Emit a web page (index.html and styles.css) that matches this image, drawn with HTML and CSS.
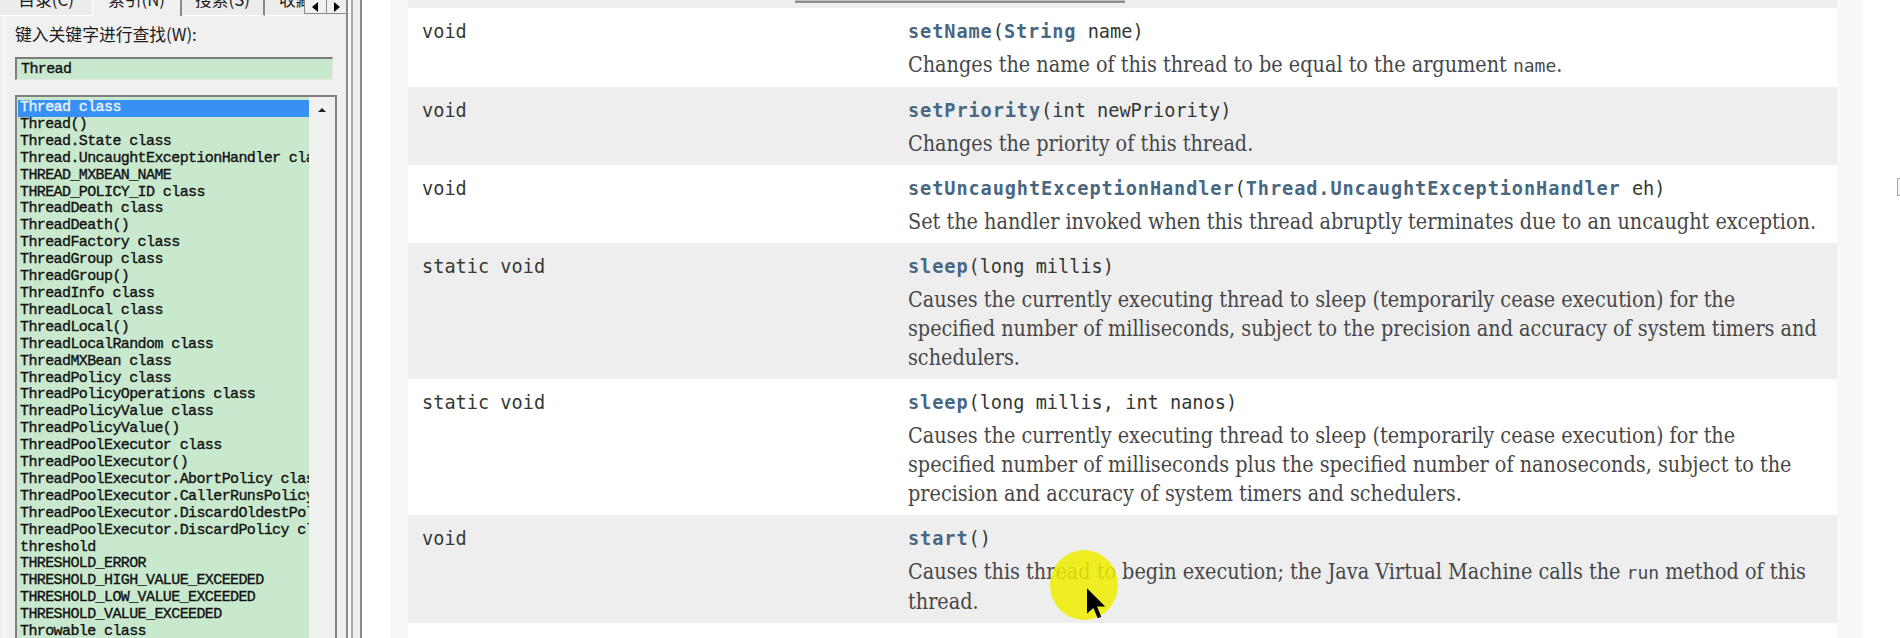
FILE: index.html
```html
<!DOCTYPE html>
<html lang="zh-CN">
<head>
<meta charset="utf-8">
<title>Thread - Java API</title>
<link rel="stylesheet" href="styles.css">
</head>
<body>
<div class="app">
  <aside class="sidebar">
    <div class="tabs">
      <div class="tab"><span>目录(C)</span></div>
      <div class="tab active"><span>索引(N)</span></div>
      <div class="tab narrow"><span>搜索(S)</span></div>
      <div class="tab cut"><span>收藏夹(I)</span></div>
      <div class="tab-arrows"><span class="arr left"></span><span class="arr right"></span></div>
    </div>
    <div class="page">
      <div class="kw-label">键入关键字进行查找(W):</div>
      <div class="kw-input">Thread</div>
      <div class="list">
        <ul class="items">
          <li class="sel">Thread class</li>
          <li>Thread()</li>
          <li>Thread.State class</li>
          <li>Thread.UncaughtExceptionHandler class</li>
          <li>THREAD_MXBEAN_NAME</li>
          <li>THREAD_POLICY_ID class</li>
          <li>ThreadDeath class</li>
          <li>ThreadDeath()</li>
          <li>ThreadFactory class</li>
          <li>ThreadGroup class</li>
          <li>ThreadGroup()</li>
          <li>ThreadInfo class</li>
          <li>ThreadLocal class</li>
          <li>ThreadLocal()</li>
          <li>ThreadLocalRandom class</li>
          <li>ThreadMXBean class</li>
          <li>ThreadPolicy class</li>
          <li>ThreadPolicyOperations class</li>
          <li>ThreadPolicyValue class</li>
          <li>ThreadPolicyValue()</li>
          <li>ThreadPoolExecutor class</li>
          <li>ThreadPoolExecutor()</li>
          <li>ThreadPoolExecutor.AbortPolicy class</li>
          <li>ThreadPoolExecutor.CallerRunsPolicy class</li>
          <li>ThreadPoolExecutor.DiscardOldestPolicy class</li>
          <li>ThreadPoolExecutor.DiscardPolicy class</li>
          <li>threshold</li>
          <li>THRESHOLD_ERROR</li>
          <li>THRESHOLD_HIGH_VALUE_EXCEEDED</li>
          <li>THRESHOLD_LOW_VALUE_EXCEEDED</li>
          <li>THRESHOLD_VALUE_EXCEEDED</li>
          <li>Throwable class</li>
          <li>throwing()</li>
        </ul>
        <div class="vscroll"><span class="up"></span></div>
      </div>
    </div>
  </aside>
  <div class="splitter"></div>
  <main class="content">
    <div class="block">
      <div class="top-band"><div class="cap-bar"></div></div>
      <div class="row alt">
        <div class="type">void</div>
        <div class="member">
          <div class="sig"><span class="lnk">setName</span>(<span class="lnk">String</span> name)</div>
          <div class="desc">Changes the name of this thread to be equal to the argument <code>name</code>.</div>
        </div>
      </div>
      <div class="row">
        <div class="type">void</div>
        <div class="member">
          <div class="sig"><span class="lnk">setPriority</span>(int newPriority)</div>
          <div class="desc">Changes the priority of this thread.</div>
        </div>
      </div>
      <div class="row alt">
        <div class="type">void</div>
        <div class="member">
          <div class="sig"><span class="lnk">setUncaughtExceptionHandler</span>(<span class="lnk">Thread.UncaughtExceptionHandler</span> eh)</div>
          <div class="desc">Set the handler invoked when this thread abruptly terminates due to an uncaught exception.</div>
        </div>
      </div>
      <div class="row">
        <div class="type">static void</div>
        <div class="member">
          <div class="sig"><span class="lnk">sleep</span>(long millis)</div>
          <div class="desc">Causes the currently executing thread to sleep (temporarily cease execution) for the specified number of milliseconds, subject to the precision and accuracy of system timers and schedulers.</div>
        </div>
      </div>
      <div class="row alt">
        <div class="type">static void</div>
        <div class="member">
          <div class="sig"><span class="lnk">sleep</span>(long millis, int nanos)</div>
          <div class="desc">Causes the currently executing thread to sleep (temporarily cease execution) for the specified number of milliseconds plus the specified number of nanoseconds, subject to the precision and accuracy of system timers and schedulers.</div>
        </div>
      </div>
      <div class="row">
        <div class="type">void</div>
        <div class="member">
          <div class="sig"><span class="lnk">start</span>()</div>
          <div class="desc">Causes this thread to begin execution; the Java Virtual Machine calls the <code>run</code> method of this thread.</div>
        </div>
      </div>
      <div class="row alt">
        <div class="type">void</div>
        <div class="member">
          <div class="sig"><span class="lnk">stop</span>()</div>
          <div class="desc">Deprecated.</div>
        </div>
      </div>
    </div>
    <div class="scroll-mark"></div>
  </main>
  <div class="spot"></div>
  <svg class="pointer" width="19" height="32" viewBox="0 0 12 20" aria-hidden="true">
    <path d="M0 0 L0 16 L4 12.5 L6.8 19 L9 18 L6.3 11.6 L11.5 11.6 Z" fill="#000"/>
  </svg>
</div>
</body>
</html>
```

FILE: styles.css
```css
* { box-sizing: border-box; margin: 0; padding: 0; }
html, body { width: 1900px; height: 638px; overflow: hidden; background: #fff; }
body { font-family: "DejaVu Sans", sans-serif; }

.app { position: relative; display: flex; height: 638px; overflow: hidden; }

/* ---------- left help panel ---------- */
.sidebar {
  width: 348px; flex: none; background: #f0f0f0;
  border-right: 2px solid #8a8a8a;
  display: flex; flex-direction: column; overflow: hidden;
}
.tabs { height: 16px; flex: none; display: flex; position: relative; overflow: hidden; }
.tab {
  width: 92px; flex: none; display: flex; justify-content: center;
  border-bottom: 1px solid #fff; background: #ececec;
  font-family: "Noto Sans CJK SC", sans-serif; font-size: 16.8px; color: #1a1a1a;
}
.tab span { display: block; line-height: 18px; margin-top: -10px; white-space: nowrap; }
.tab.active { width: 90px; background: #f0f0f0; border-left: 1px solid #fff; border-right: 2px solid #8a8a8a; border-bottom: none; }
.tab.narrow { width: 83px; border-right: 2px solid #8a8a8a; }
.tab.cut { width: 39px; justify-content: flex-start; padding-left: 14px; overflow: hidden; }
.tab-arrows { width: 43px; flex: none; display: flex; height: 14px; border-bottom: 1px solid #8a8a8a; }
.arr { flex: 1; display: flex; align-items: center; justify-content: center; border-left: 1px solid #8a8a8a; background: #f0f0f0; }
.arr.left::before { content: ""; border-style: solid; border-width: 5px 6px 5px 0; border-color: transparent #000 transparent transparent; }
.arr.right::before { content: ""; border-style: solid; border-width: 5px 0 5px 6px; border-color: transparent transparent transparent #000; }

.page {
  flex: 1; margin-left: 4px; border-left: 1px solid #fff; padding-left: 10px;
  display: flex; flex-direction: column;
}
.kw-label {
  margin-top: 8px; line-height: 20px;
  font-family: "Noto Sans CJK SC", sans-serif; font-size: 16.8px; color: #1a1a1a;
}
.kw-input {
  margin-top: 13px; width: 318px; height: 23px;
  background: #c9e9cf;
  border-top: 2px solid #7d7d7d; border-left: 2px solid #7d7d7d;
  border-right: 1px solid #e4e4e4; border-bottom: 1px solid #e4e4e4;
  padding-left: 4px;
  font-family: "Liberation Mono", monospace; font-size: 15px; letter-spacing: -0.6px;
  -webkit-text-stroke: 0.35px currentColor;
  line-height: 21px; color: #111;
}
.list {
  margin-top: 15px; width: 322px; flex: 1;
  border: 2px solid #808080; display: flex; background: #c9e9cf;
}
.items {
  list-style: none; flex: 1; min-width: 0; padding: 3px 0 0 1px;
  font-family: "Liberation Mono", monospace; font-size: 15px; letter-spacing: -0.6px;
  -webkit-text-stroke: 0.35px currentColor;
  line-height: 16.9px; color: #111;
}
.items li { padding-left: 2px; white-space: nowrap; overflow: hidden; }
.items li.sel { background: #3790f2; color: #eaf4ff; }
.vscroll { width: 26px; flex: none; background: #f0f0f0; }
.up { display: flex; height: 26px; align-items: center; justify-content: center; }
.up::before { content: ""; border-style: solid; border-width: 0 4px 4px 4px; border-color: transparent transparent #222 transparent; }

.splitter {
  width: 14px; flex: none; background: #efefef;
  border-left: 3px solid #fafafa; border-right: 2px solid #8a8a8a;
  box-shadow: inset 2px 0 0 #a8a8a8;
}

/* ---------- javadoc content ---------- */
.content { flex: 1; position: relative; padding-left: 28px; background: #fff; }
.block { width: 1472px; height: 100%; background: #f8f8f8; padding: 0 25px 0 18px; overflow: hidden; }
.top-band { height: 8px; background: #eeeeef; padding-left: 387px; }
.cap-bar { width: 330px; height: 3px; background: #8d8d8d; border-top: 1px solid #bdbdbd; }

.row {
  display: grid; grid-template-columns: 486px 1fr;
  background: #eeeeef; padding: 10px 0 7.5px;
}
.row.alt { background: #fff; }
.type {
  padding-left: 14px;
  font-family: "DejaVu Sans Mono", monospace; font-size: 18.6px; line-height: 28px; color: #353833;
}
.member { padding: 0 10px 0 14px; }
.sig {
  font-family: "DejaVu Sans Mono", monospace; font-size: 18.6px; line-height: 28px; color: #353833;
  white-space: nowrap;
}
.lnk { font-weight: bold; color: #4a6782; letter-spacing: 0.9px; }
.desc {
  margin-top: 3.5px;
  font-family: "DejaVu Serif", serif; font-stretch: condensed; font-size: 21.4px; line-height: 29px; color: #474747;
}
.desc code { font-family: "DejaVu Sans Mono", monospace; font-stretch: condensed; font-size: 18px; color: #4a4a4a; }

.scroll-mark {
  position: absolute; right: 0; top: 178px; width: 3px; height: 18px;
  border: 1px solid #a8a8a8; border-right: none; background: #f4f4f4;
}

/* recorded cursor highlight */
.spot {
  position: absolute; left: 1050px; top: 550px; width: 68px; height: 70px;
  border-radius: 50%; background: rgba(238, 238, 0, 0.86);
}
.pointer { position: absolute; left: 1087px; top: 588px; }
```
